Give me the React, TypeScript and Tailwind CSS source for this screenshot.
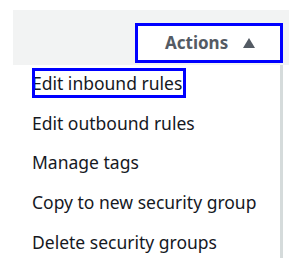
import { useState } from 'react';

const MENU_ITEMS = [
  'Edit inbound rules',
  'Edit outbound rules',
  'Manage tags',
  'Copy to new security group',
  'Delete security groups',
];

export default function App() {
  const [open] = useState(true);

  return (
    <div className="w-[289px] h-[275px] bg-white overflow-hidden font-['Noto_Sans',sans-serif]">
      {/* Toolbar */}
      <div className="ml-[13px] mt-[10px] h-[55px] bg-[#f2f3f3] flex justify-end items-start pt-[13px] pr-[6px]">
        <button className="w-[148px] h-[40px] border-[3px] border-[#0000ff] bg-white flex items-center pl-[27px] text-[#545b64]">
          <span className="text-[17px] font-bold">Actions</span>
          <svg className="ml-[15px] mt-[-1px]" width="12" height="10" viewBox="0 0 12 10">
            <path d="M6 0 L12 10 L0 10 Z" fill="#545b64" />
          </svg>
        </button>
      </div>

      {/* Dropdown */}
      {open && (
        <div className="ml-[13px] w-[270px] h-[193px] border-r-[3px] border-[#d5dbdb] bg-white">
          {MENU_ITEMS.map((item, i) => (
            <div key={item} className="relative h-[39.75px] flex items-center pl-[19px] pb-[4px]">
              <span className="text-[17.5px] text-[#16191f]">{item}</span>
              {i === 0 && (
                <span className="absolute left-[19px] top-[3px] w-[154px] h-[30px] border-[3px] border-[#0000ff]" />
              )}
            </div>
          ))}
        </div>
      )}
    </div>
  );
}
